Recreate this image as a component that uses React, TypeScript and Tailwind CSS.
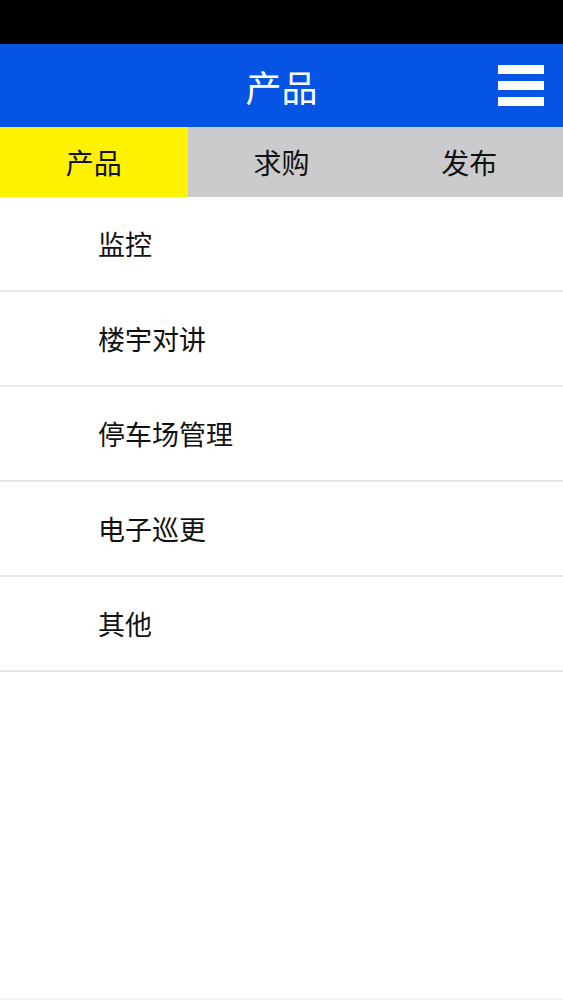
import React from 'react';

const tabs = ['产品', '求购', '发布'];
const items = ['监控', '楼宇对讲', '停车场管理', '电子巡更', '其他'];

export default function App() {
  return (
    <div
      className="flex h-[1000px] w-full flex-col bg-white"
      style={{ fontFamily: '"Noto Sans CJK SC", "Noto Sans", sans-serif' }}
    >
      <div className="h-[44px] shrink-0 bg-black" />
      <header className="relative flex h-[83px] shrink-0 items-center justify-center bg-[#0554e3]">
        <h1 className="text-[36px] leading-none text-white">产品</h1>
        <button className="absolute right-[19px] top-[21px] flex w-[46px] flex-col gap-[7.5px]">
          <span className="block h-[8.5px] w-full bg-white" />
          <span className="block h-[8.5px] w-full bg-white" />
          <span className="block h-[8.5px] w-full bg-white" />
        </button>
      </header>
      <nav className="grid h-[70px] shrink-0 grid-cols-3 bg-[#cbcbcd]">
        {tabs.map((t, i) => (
          <div
            key={t}
            className={`flex items-center justify-center text-[28px] leading-none text-[#111] ${
              i === 0 ? 'bg-[#fff200]' : ''
            }`}
          >
            {t}
          </div>
        ))}
      </nav>
      <ul className="flex flex-col">
        {items.map(item => (
          <li
            key={item}
            className="flex h-[95px] items-center border-b-2 border-[#e6e6e6] pl-[98px] text-[27px] leading-none text-[#111]"
          >
            {item}
          </li>
        ))}
      </ul>
      <div className="flex-1" />
      <div className="h-[2px] shrink-0 bg-[#f3f3f3]" />
    </div>
  );
}
